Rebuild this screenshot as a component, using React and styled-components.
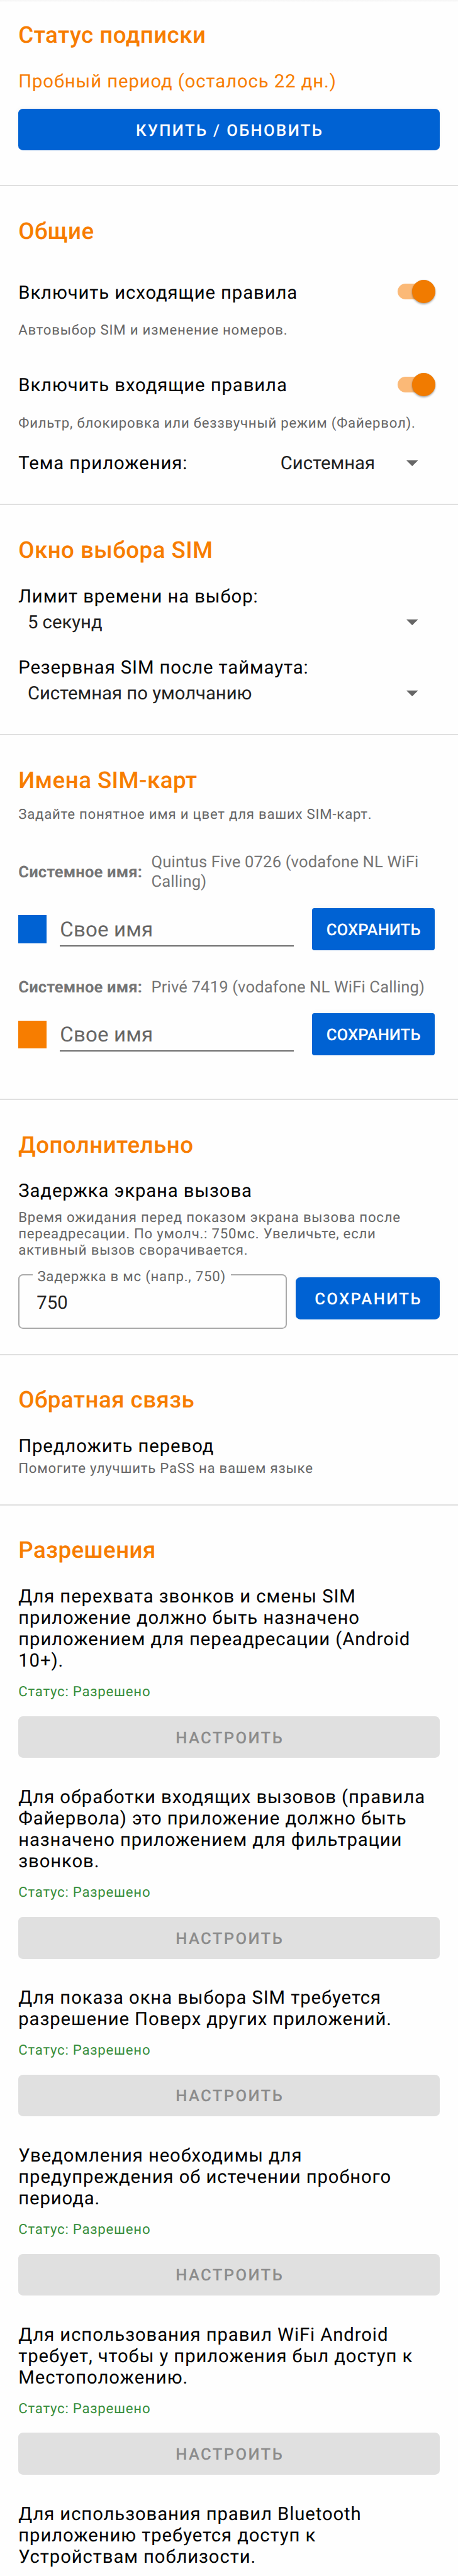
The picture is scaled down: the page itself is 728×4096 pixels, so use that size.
import React from "react";
import styled, { createGlobalStyle, css } from "styled-components";

// Sizes are given on a 1344-unit wide grid and scaled to the 728px viewport.
const u = (n) => `${(n * 728) / 1344}px`;

const colors = {
  accent: "#f77d00",
  primary: "#0062d3",
  text: "#000000",
  value: "#212121",
  muted: "#666666",
  system: "#757575",
  success: "#388e3c",
  line: "#e0e0e0",
  page: "#fefefe",
};

const GlobalStyle = createGlobalStyle`
  *, *::before, *::after { box-sizing: border-box; }
  html { overflow: hidden; }
  body {
    margin: 0;
    background: ${colors.page};
    font-family: Roboto, "Noto Sans", sans-serif;
    color: ${colors.text};
    text-rendering: geometricPrecision;
    -webkit-font-smoothing: antialiased;
  }
`;

const Page = styled.main`
  width: 728px;
  height: 4096px;
  overflow: hidden;
  background: linear-gradient(#f5f5f5, ${colors.page} 4px);
`;

const Section = styled.section`
  height: ${(p) => (p.$height ? u(p.$height) : "auto")};
  padding: ${(p) => u(p.$top ?? 91.5)} ${u(54)} 0;
  border-bottom: ${(p) => (p.$last ? "none" : `2px solid ${colors.line}`)};
`;

const Title = styled.h2`
  margin: 0;
  font-size: ${u(67.75)};
  line-height: ${u(80)};
  font-weight: 500;
  letter-spacing: 0.0125em;
  color: ${colors.accent};
`;

const Body = styled.p`
  margin: ${(p) => u(p.$gap ?? 64)} 0 ${u(-1.5)};
  padding-top: ${u(1.5)};
  font-size: ${u(54)};
  line-height: ${u(63)};
  letter-spacing: 0.03125em;
  color: ${(p) => p.$color ?? colors.text};
  white-space: pre;
`;

const Caption = styled.p`
  margin: ${(p) => u(p.$gap ?? 7)} 0 ${u(-1.5)};
  padding-top: ${u(1.5)};
  font-size: ${u(41)};
  line-height: ${u(48)};
  letter-spacing: 0.0345em;
  color: ${(p) => p.$color ?? colors.muted};
  white-space: pre;
`;

const Button = styled.button`
  display: flex;
  align-items: center;
  justify-content: center;
  flex: none;
  width: ${(p) => (p.$width ? u(p.$width) : "100%")};
  height: ${u(123)};
  margin: ${(p) => u(p.$gap ?? 0)} 0 0;
  padding: ${u(6)} 0 0 ${u(4)};
  border: 0;
  border-radius: ${u(13.5)};
  background: ${colors.primary};
  color: #ffffff;
  font: 500 ${u(47.4)} / ${u(56)} Roboto, "Noto Sans", sans-serif;
  letter-spacing: 0.0905em;
  text-rendering: inherit;
  white-space: nowrap;
  box-shadow: 0 -2px 6px rgba(0, 0, 0, 0.035);

  &:disabled {
    background: #e0e0e0;
    color: #8c8c8c;
    box-shadow: none;
  }

  ${(p) =>
    p.$compact &&
    css`
      padding-left: 0;
      border-radius: ${u(6.75)};
      letter-spacing: 0;
    `}
`;

const SwitchRow = styled.label`
  display: flex;
  align-items: center;
  justify-content: space-between;
  height: ${u(162)};
  margin-top: ${u(56)};
  padding-right: ${u(12)};
`;

const RowLabel = styled(Body).attrs({ as: "span" })`
  margin: ${(p) => u(p.$gap ?? 7)} 0 0;
`;

const Track = styled.span`
  display: flex;
  align-items: center;
  justify-content: flex-end;
  width: ${u(111)};
  height: ${u(47)};
  border-radius: ${u(24)};
  background: #fbb977;
`;

const Thumb = styled.span`
  width: ${u(68)};
  height: ${u(68)};
  flex: none;
  border-radius: 50%;
  background: #f17b00;
  box-shadow: 0 2px 3px rgba(0, 0, 0, 0.3), 0 0 2px rgba(0, 0, 0, 0.1);
`;

const ThemeRow = styled.div`
  display: flex;
  justify-content: space-between;
  margin-top: ${u(64)};
`;

const Select = styled.div`
  display: flex;
  align-items: center;
  justify-content: space-between;
  width: ${(p) => (p.$width ? u(p.$width) : "auto")};
  height: ${u(63)};
  margin-top: ${(p) => u(p.$gap ?? 0)};
  padding: 0 ${u(64)} 0 ${u(27)};
  font-size: ${u(54)};
  line-height: ${u(63)};
  color: ${colors.value};
`;

const SelectValue = styled.span`
  padding-top: ${u(2)};
`;

const ArrowIcon = styled.svg`
  display: block;
  width: ${u(34)};
  height: ${u(17)};
  fill: #666666;
`;

const SystemRow = styled.div`
  display: flex;
  align-items: center;
  gap: ${u(27)};
  margin-top: ${(p) => u(p.$gap)};
  font-size: ${u(47.25)};
  line-height: ${u(57)};
  color: ${colors.system};
`;

const SystemLabel = styled.strong`
  flex: none;
  width: ${u(363)};
  padding-top: ${u(1)};
  font-weight: 700;
  letter-spacing: 0.007em;
  white-space: nowrap;
`;

const SystemValue = styled.span`
  padding-top: ${u(1)};
  letter-spacing: 0.006em;
  white-space: pre;
`;

const SimRow = styled.div`
  display: flex;
  align-items: center;
  height: ${u(123)};
  margin-top: ${u(48)};
`;

const Swatch = styled.span`
  flex: none;
  width: ${u(82)};
  height: ${u(82)};
  margin-right: ${u(40)};
  background: ${(p) => p.$color};
`;

const NameField = styled.div`
  align-self: flex-start;
  width: ${u(686)};
  height: ${u(112)};
  margin-right: ${u(54)};
  padding-top: ${u(29)};
  border-bottom: 2px solid #6c6c6c;
  font-size: ${u(61)};
  line-height: ${u(71)};
  letter-spacing: 0.005em;
  color: ${colors.muted};
`;

const DelayRow = styled.div`
  display: flex;
  align-items: flex-start;
  justify-content: space-between;
  margin-top: ${u(47)};
`;

const OutlinedField = styled.div`
  position: relative;
  width: ${u(787)};
  height: ${u(161)};
  padding: ${u(50)} 0 0 ${u(50)};
  border: 2px solid #a9a9a9;
  border-radius: ${u(13.5)};
  font-size: ${u(54)};
  line-height: ${u(63)};
  color: ${colors.value};
`;

const FloatingLabel = styled.span`
  position: absolute;
  top: ${u(-20)};
  left: ${u(38)};
  padding: 0 ${u(14)};
  background: ${colors.page};
  font-size: ${u(41)};
  line-height: ${u(48)};
  letter-spacing: 0.0345em;
  color: ${colors.muted};
  white-space: nowrap;
`;

const Arrow = () => (
  <ArrowIcon viewBox="0 0 10 5" aria-hidden="true">
    <path d="M0 0h10L5 5z" />
  </ArrowIcon>
);

const Switch = () => (
  <Track role="switch" aria-checked="true">
    <Thumb />
  </Track>
);

const sims = [
  { name: "Quintus Five 0726 (vodafone NL WiFi\nCalling)", color: colors.primary, gap: 90.5 },
  { name: "Privé 7419 (vodafone NL WiFi Calling)", color: colors.accent, gap: 80 },
];

const permissions = [
  "Для перехвата звонков и смены SIM\nприложение должно быть назначено\nприложением для переадресации (Android\n10+).",
  "Для обработки входящих вызовов (правила\nФайервола) это приложение должно быть\nназначено приложением для фильтрации\nзвонков.",
  "Для показа окна выбора SIM требуется\nразрешение Поверх других приложений.",
  "Уведомления необходимы для\nпредупреждения об истечении пробного\nпериода.",
  "Для использования правил WiFi Android\nтребует, чтобы у приложения был доступ к\nМестоположению.",
];

export default function App() {
  return (
    <>
      <GlobalStyle />
      <Page>
        <Section $top={63.5} $height={547}>
          <Title>Статус подписки</Title>
          <Body $gap={63} $color={colors.accent}>Пробный период (осталось 22 дн.)</Body>
          <Button $gap={49.5}>КУПИТЬ / ОБНОВИТЬ</Button>
        </Section>

        <Section $height={936}>
          <Title>Общие</Title>
          <SwitchRow>
            <RowLabel>Включить исходящие правила</RowLabel>
            <Switch />
          </SwitchRow>
          <Caption>Автовыбор SIM и изменение номеров.</Caption>
          <SwitchRow>
            <RowLabel>Включить входящие правила</RowLabel>
            <Switch />
          </SwitchRow>
          <Caption>Фильтр, блокировка или беззвучный режим (Файервол).</Caption>
          <ThemeRow>
            <RowLabel $gap={0}>Тема приложения:</RowLabel>
            <Select $width={494}>
              <SelectValue>Системная</SelectValue>
              <Arrow />
            </Select>
          </ThemeRow>
        </Section>

        <Section $height={676}>
          <Title>Окно выбора SIM</Title>
          <Body>Лимит времени на выбор:</Body>
          <Select $gap={14}>
            <SelectValue>5 секунд</SelectValue>
            <Arrow />
          </Select>
          <Body $gap={69}>Резервная SIM после таймаута:</Body>
          <Select $gap={14}>
            <SelectValue>Системная по умолчанию</SelectValue>
            <Arrow />
          </Select>
        </Section>

        <Section $height={1070}>
          <Title>Имена SIM-карт</Title>
          <Caption $gap={34}>Задайте понятное имя и цвет для ваших SIM-карт.</Caption>
          {sims.map((sim) => (
            <React.Fragment key={sim.name}>
              <SystemRow $gap={sim.gap}>
                <SystemLabel>Системное имя:</SystemLabel>
                <SystemValue>{sim.name}</SystemValue>
              </SystemRow>
              <SimRow>
                <Swatch $color={sim.color} />
                <NameField>Свое имя</NameField>
                <Button $compact $width={360}>СОХРАНИТЬ</Button>
              </SimRow>
            </React.Fragment>
          ))}
        </Section>

        <Section $height={749}>
          <Title>Дополнительно</Title>
          <Body>Задержка экрана вызова</Body>
          <Caption $gap={22}>
            {"Время ожидания перед показом экрана вызова после\nпереадресации. По умолч.: 750мс. Увеличьте, если\nактивный вызов сворачивается."}
          </Caption>
          <DelayRow>
            <OutlinedField>
              <FloatingLabel>Задержка в мс (напр., 750)</FloatingLabel>
              750
            </OutlinedField>
            <Button $gap={10} $width={422}>СОХРАНИТЬ</Button>
          </DelayRow>
        </Section>

        <Section $height={441}>
          <Title>Обратная связь</Title>
          <Body>Предложить перевод</Body>
          <Caption $gap={8}>Помогите улучшить PaSS на вашем языке</Caption>
        </Section>

        <Section $last>
          <Title>Разрешения</Title>
          {permissions.map((text, i) => (
            <React.Fragment key={text}>
              <Body $gap={i === 0 ? 64 : 82.5}>{text}</Body>
              <Caption $gap={35} $color={colors.success}>Статус: Разрешено</Caption>
              <Button $gap={48.5} disabled>НАСТРОИТЬ</Button>
            </React.Fragment>
          ))}
          <Body $gap={82.5}>
            {"Для использования правил Bluetooth\nприложению требуется доступ к\nУстройствам поблизости."}
          </Body>
        </Section>
      </Page>
    </>
  );
}
